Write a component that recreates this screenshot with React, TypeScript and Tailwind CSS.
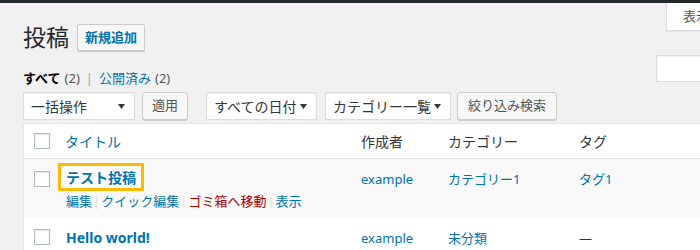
import React from "react";

function Check() {
  return <span className="block w-4 h-4 bg-white border border-[#b4b9be] shadow-[inset_0_1px_2px_rgba(0,0,0,0.1)]" />;
}

function Arrow() {
  return (
    <svg width="7" height="5" viewBox="0 0 7 5" className="shrink-0">
      <path d="M0 0h7L3.5 5z" fill="#32373c" />
    </svg>
  );
}

function Select({ label, className }: { label: string; className: string }) {
  return (
    <div
      className={`flex items-center justify-between h-[28px] pl-[7px] pr-[9px] bg-white border border-[#ddd] shadow-[inset_0_1px_2px_rgba(0,0,0,0.07)] text-[14px] text-[#32373c] ${className}`}
    >
      <span>{label}</span>
      <Arrow />
    </div>
  );
}

function Button({ label, className }: { label: string; className: string }) {
  return (
    <div
      className={`flex items-center justify-center h-[28px] bg-[#f7f7f7] border border-[#ccc] rounded-[3px] shadow-[0_1px_0_#ccc] text-[13px] text-[#555] ${className}`}
    >
      {label}
    </div>
  );
}

const cols = "grid grid-cols-[42px_295px_87px_131px_1fr]";

export default function App() {
  return (
    <div className="w-[700px] h-[250px] overflow-hidden bg-[#f1f1f1] font-['Noto_Sans','Noto_Sans_CJK_JP',sans-serif]">
      <div className="h-[3px] bg-[#23282d]" />
      <div className="pl-[23px]">
        {/* heading + screen options */}
        <div className="flex items-start">
          <div className="flex items-center mt-[21px] h-[27px]">
            <h1 className="text-[23px] leading-[27px] text-[#23282d] font-normal">投稿</h1>
            <div className="ml-[8px] h-[27px] px-[7px] flex items-center bg-[#f7f7f7] border border-[#ccc] rounded-[2px] shadow-[0_1px_0_#ccc] text-[13px] font-semibold text-[#0073aa]">
              新規追加
            </div>
          </div>
          <div className="ml-auto w-[34px] shrink-0">
            <div className="w-[150px] h-[28px] bg-white border-l border-b border-[#ddd] shadow-[0_1px_1px_rgba(0,0,0,0.04)] pl-[16px] flex items-center text-[13px] text-[#555]">
              表示オプション
            </div>
          </div>
        </div>

        {/* views + search */}
        <div className="flex items-end mt-[4px]">
          <div className="h-[20px] leading-[20px] text-[13px] flex items-center">
            <span className="font-semibold text-black">すべて</span>
            <span className="ml-[4px] text-[#555]">(2)</span>
            <span className="mx-[6px] text-[#a0a5aa]">|</span>
            <span className="text-[#0073aa]">公開済み</span>
            <span className="ml-[4px] text-[#555]">(2)</span>
          </div>
          <div className="ml-auto w-[44px] shrink-0 mb-[6px]">
            <div className="w-[200px] h-[27px] bg-white border border-[#ddd] shadow-[inset_0_1px_2px_rgba(0,0,0,0.07)]" />
          </div>
        </div>

        {/* filters */}
        <div className="flex items-center mt-[4px]">
          <Select label="一括操作" className="w-[112px]" />
          <Button label="適用" className="w-[46px] ml-[7px]" />
          <Select label="すべての日付" className="w-[111px] ml-[18px]" />
          <Select label="カテゴリー一覧" className="w-[126px] ml-[8px]" />
          <Button label="絞り込み検索" className="w-[100px] ml-[6px]" />
        </div>

        {/* table */}
        <div className="mt-[3px] w-[720px] bg-white border border-[#e5e5e5] shadow-[0_1px_1px_rgba(0,0,0,0.04)]">
          <div className={`${cols} h-[35px] items-center border-b border-[#e1e1e1] text-[14px] text-[#32373c]`}>
            <div className="pl-[10px]">
              <Check />
            </div>
            <div className="-ml-px text-[#0073aa]">タイトル</div>
            <div>作成者</div>
            <div>カテゴリー</div>
            <div>タグ</div>
          </div>

          <div className={`${cols} h-[59px] items-start bg-[#f9f9f9] text-[13px] text-[#0073aa]`}>
            <div className="pt-[12px] pl-[10px]">
              <Check />
            </div>
            <div className="pt-[4px]">
              <div className="-ml-[8px] inline-flex items-center h-[28px] px-[5px] border-[3px] border-[#ffb900] bg-white text-[14px] font-bold">
                テスト投稿
              </div>
              <div className="h-[20px] leading-[20px] flex items-center">
                <span>編集</span>
                <span className="mx-[1px] text-[#ddd]">|</span>
                <span>クイック編集</span>
                <span className="mx-[1px] text-[#ddd]">|</span>
                <span className="text-[#a00]">ゴミ箱へ移動</span>
                <span className="mx-[1px] text-[#ddd]">|</span>
                <span>表示</span>
              </div>
            </div>
            <div className="pt-[10px] leading-[20px]">example</div>
            <div className="pt-[10px] leading-[20px]">カテゴリー1</div>
            <div className="pt-[10px] leading-[20px]">タグ1</div>
          </div>

          <div className={`${cols} h-[40px] items-start text-[13px] text-[#0073aa]`}>
            <div className="pt-[11px] pl-[10px]">
              <Check />
            </div>
            <div className="pt-[10px] leading-[20px] text-[14px] font-bold">Hello world!</div>
            <div className="pt-[10px] leading-[20px]">example</div>
            <div className="pt-[10px] leading-[20px]">未分類</div>
            <div className="pt-[10px] leading-[20px] text-[#32373c]">—</div>
          </div>
        </div>
      </div>
    </div>
  );
}
